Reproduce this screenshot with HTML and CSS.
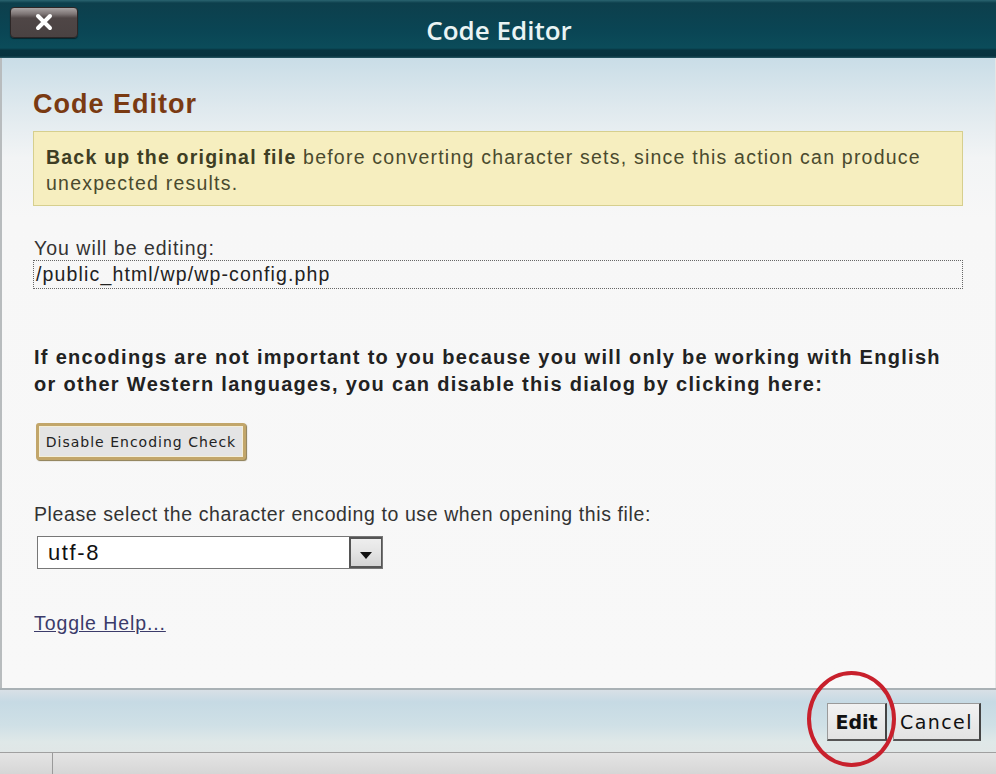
FILE: index.html
```html
<!DOCTYPE html>
<html>
<head>
<meta charset="utf-8">
<link rel="stylesheet" href="styles.css">
</head>
<body>
<div class="dialog">
  <div class="titlebar">
    <button class="close" type="button">
      <svg width="20" height="18" viewBox="0 0 20 18"><path d="M4 3 L16 15 M16 3 L4 15" stroke="#fff" stroke-width="4" stroke-linecap="round"/></svg>
    </button>
    <div class="title">Code Editor</div>
  </div>
  <div class="body">
    <h1 class="heading">Code Editor</h1>
    <div class="notice"><span class="strong">Back up the original file</span> before converting character sets, since this action can produce unexpected results.</div>
    <div class="label editing">You will be editing:</div>
    <div class="path">/public_html/wp/wp-config.php</div>
    <p class="bold-para">If encodings are not important to you because you will only be working with English or other Western languages, you can disable this dialog by clicking here:</p>
    <button class="disable" type="button">Disable Encoding Check</button>
    <div class="label select-label">Please select the character encoding to use when opening this file:</div>
    <div class="select">
      <span class="select-value">utf-8</span>
      <span class="select-arrow"><svg width="16" height="10" viewBox="0 0 16 10"><path d="M2 2 L14 2 L8 9 Z" fill="#111"/></svg></span>
    </div>
    <a class="toggle" href="#">Toggle Help...</a>
  </div>
  <div class="footer">
    <button class="btn edit" type="button">Edit</button>
    <button class="btn cancel" type="button">Cancel</button>
    <div class="circle"></div>
  </div>
  <div class="status">
    <div class="status-cell"></div>
    <div class="status-cell wide"></div>
  </div>
</div>
</body>
</html>
```
FILE: styles.css
```css
* { box-sizing: border-box; }
html, body { margin: 0; padding: 0; }
body {
  width: 996px;
  height: 774px;
  overflow: hidden;
  background: #dcdcdc;
  font-family: "Liberation Sans", Arial, sans-serif;
}
.dialog {
  display: flex;
  flex-direction: column;
  width: 996px;
  height: 774px;
}
.titlebar {
  position: relative;
  height: 58px;
  background: linear-gradient(to bottom, #2a6470 0px, #0d3f4c 3px, #0a4554 30px, #0b4c5a 48px, #073440 50px, #06323e 56px, #2a5a66 58px);
  display: flex;
  align-items: center;
  justify-content: center;
}
.close {
  position: absolute;
  left: 10px;
  top: 7px;
  width: 68px;
  height: 31px;
  border: 1px solid #2c2626;
  border-radius: 4px;
  background: linear-gradient(to bottom, #aaa4a4 0px, #7d7575 6px, #4f4646 10px, #4a4242 100%);
  box-shadow: 0 1px 1px rgba(0,0,0,0.5);
  padding: 0;
  display: flex;
  align-items: flex-start;
  justify-content: center;
  padding-top: 5px;
}
.title {
  font-family: "Open Sans", "DejaVu Sans", sans-serif;
  font-weight: 600;
  font-size: 26px;
  color: #eaf4f4;
  margin-top: 2px;
  margin-left: 2px;
}
.body {
  height: 630px;
  background: linear-gradient(to bottom, #c9dde7 0px, #dfe9ee 50px, #f2f4f5 100px, #f7f7f7 160px, #f8f8f8 100%);
  border-left: 2px solid #b8bcbe;
  border-right: 1px solid #e6e6e6;
  padding: 30px 32px 0 30px;
  color: #333;
}
.heading {
  margin: 0 0 0 1px;
  font-size: 27px;
  font-weight: bold;
  color: #7a3a12;
  letter-spacing: 1px;
  line-height: 32px;
  height: 43px;
}
.notice {
  background: #f6eebf;
  border: 1px solid #d6cf8e;
  padding: 12px 8px 9px 12px;
  font-size: 19.5px;
  line-height: 26px;
  color: #4a4a2e;
  letter-spacing: 1.22px;
  height: 75px;
  margin-left: 1px;
}
.notice .strong { font-weight: 600; color: #3e3e24; }
.label {
  font-size: 19.5px;
  color: #333;
}
.editing {
  margin-top: 30px;
  line-height: 24px;
  letter-spacing: 1px;
  padding-left: 2px;
}
.path {
  border: 1px dotted #666;
  height: 29px;
  font-size: 19.5px;
  line-height: 26px;
  padding-left: 2px;
  color: #222;
  letter-spacing: 1.15px;
  margin-left: 1px;
}
.bold-para {
  margin: 55px 0 0 2px;
  font-size: 20px;
  font-weight: bold;
  line-height: 27px;
  color: #222;
  letter-spacing: 1.3px;
}
.disable {
  display: block;
  margin: 25px 0 0 4px;
  width: 210px;
  height: 37px;
  border: 3px solid #c2a66a;
  border-radius: 3px;
  background: #e4e4e4;
  box-shadow: inset 0 0 0 1px #f4eed8, 1px 1px 1px #8a7a50;
  font-family: "DejaVu Sans", sans-serif;
  font-size: 14px;
  letter-spacing: 1px;
  color: #222;
  padding: 0;
}
.select-label {
  margin-top: 42px;
  line-height: 25px;
  letter-spacing: 0.6px;
  padding-left: 2px;
}
.select {
  margin: 9px 0 0 5px;
  width: 346px;
  height: 33px;
  border: 1px solid #777;
  background: #fff;
  display: flex;
  align-items: center;
  justify-content: space-between;
}
.select-value {
  font-size: 22px;
  letter-spacing: 1.6px;
  padding-left: 10px;
  color: #111;
}
.select-arrow {
  width: 33px;
  height: 31px;
  border: 2px solid #555;
  border-right-width: 1px;
  background: linear-gradient(to bottom, #eeeeee 0%, #e4e4e4 50%, #d4d4d4 100%);
  display: flex;
  align-items: flex-end;
  justify-content: center;
  padding-bottom: 6px;
}
.toggle {
  display: inline-block;
  margin-top: 43px;
  margin-left: 2px;
  font-size: 19.5px;
  color: #3b3b6a;
  text-decoration: underline;
  letter-spacing: 0.9px;
}
.footer {
  position: relative;
  height: 65px;
  border-top: 2px solid #a9b1b5;
  border-bottom: 1px solid #a0a0a0;
  background: linear-gradient(to bottom, #d8e0e6 0px, #c6dae4 12px, #cfe0e6 35px, #dfe8e8 52px, #e0e6e6 64px);
  display: flex;
  justify-content: flex-end;
  align-items: flex-start;
  padding: 13px 15px 0 0;
  gap: 6px;
}
.btn {
  height: 38px;
  background: linear-gradient(to bottom, #f2f2f2, #e2e2e2);
  border: 1px solid #9a9a9a;
  border-right: 2px solid #444;
  border-bottom: 2px solid #555;
  font-family: "DejaVu Sans", sans-serif;
  font-size: 19px;
  color: #111;
  padding: 0;
}
.edit { width: 60px; font-weight: bold; }
.cancel { width: 88px; letter-spacing: 1.4px; }
.circle {
  position: absolute;
  left: 807px;
  top: -19px;
  width: 89px;
  height: 96px;
  border: 4px solid #c8202c;
  border-radius: 50%;
}
.status {
  flex: 1;
  display: flex;
  background: linear-gradient(to bottom, #e4e4e4, #d6d6d6);
}
.status-cell {
  width: 53px;
  border-right: 1px solid #9a9a9a;
}
.status-cell.wide { flex: 1; border-right: none; }
```
